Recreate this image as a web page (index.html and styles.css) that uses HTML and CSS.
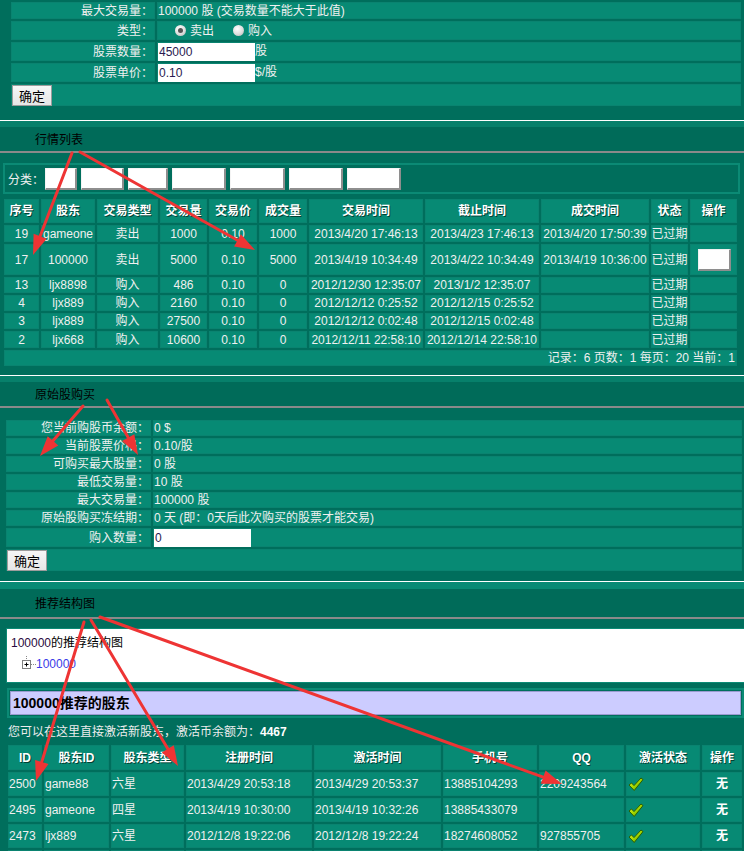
FILE: index.html
```html
<!DOCTYPE html>
<html lang="zh">
<head>
<meta charset="utf-8">
<title>股票交易</title>
<link rel="stylesheet" href="styles.css">
</head>
<body>
<div class="top">
  <table class="form form-top">
    <colgroup><col class="c-lab-top"><col></colgroup>
    <tr class="h17"><td class="lab">最大交易量：</td><td class="val">100000 股 (交易数量不能大于此值)</td></tr>
    <tr class="h19"><td class="lab">类型：</td><td class="val"><span class="radio on"></span>卖出<span class="radio second"></span>购入</td></tr>
    <tr class="h19"><td class="lab">股票数量：</td><td class="val"><input class="inp" type="text" value="45000">股</td></tr>
    <tr class="h19"><td class="lab">股票单价：</td><td class="val"><input class="inp" type="text" value="0.10">$/股</td></tr>
    <tr class="h22"><td colspan="2"><button class="btn">确定</button></td></tr>
  </table>
</div>

<div class="sec">
  <div class="band"></div>
  <div class="head">行情列表</div>
  <div class="body b2">
    <div class="filter">
      <span class="flbl">分类：</span>
      <span class="fb w32"></span><span class="fb w43"></span><span class="fb w40"></span><span class="fb w54"></span><span class="fb w55"></span><span class="fb w54"></span><span class="fb w54"></span>
    </div>
    <table class="grid g1">
      <colgroup>
        <col class="k35"><col class="k54"><col class="k61"><col class="k47"><col class="k48"><col class="k48"><col class="k114"><col class="k114"><col class="k108"><col class="k37"><col class="k47">
      </colgroup>
      <tr class="hd"><td>序号</td><td>股东</td><td>交易类型</td><td>交易量</td><td>交易价</td><td>成交量</td><td>交易时间</td><td>截止时间</td><td>成交时间</td><td>状态</td><td>操作</td></tr>
      <tr class="h17"><td>19</td><td>gameone</td><td>卖出</td><td>1000</td><td>0.10</td><td>1000</td><td>2013/4/20 17:46:13</td><td>2013/4/23 17:46:13</td><td>2013/4/20 17:50:39</td><td>已过期</td><td></td></tr>
      <tr class="h31"><td>17</td><td>100000</td><td>卖出</td><td>5000</td><td>0.10</td><td>5000</td><td>2013/4/19 10:34:49</td><td>2013/4/22 10:34:49</td><td>2013/4/19 10:36:00</td><td>已过期</td><td><span class="wbtn"></span></td></tr>
      <tr class="h16"><td>13</td><td>ljx8898</td><td>购入</td><td>486</td><td>0.10</td><td>0</td><td>2012/12/30 12:35:07</td><td>2013/1/2 12:35:07</td><td></td><td>已过期</td><td></td></tr>
      <tr class="h16"><td>4</td><td>ljx889</td><td>购入</td><td>2160</td><td>0.10</td><td>0</td><td>2012/12/12 0:25:52</td><td>2012/12/15 0:25:52</td><td></td><td>已过期</td><td></td></tr>
      <tr class="h16"><td>3</td><td>ljx889</td><td>购入</td><td>27500</td><td>0.10</td><td>0</td><td>2012/12/12 0:02:48</td><td>2012/12/15 0:02:48</td><td></td><td>已过期</td><td></td></tr>
      <tr class="h17"><td>2</td><td>ljx668</td><td>购入</td><td>10600</td><td>0.10</td><td>0</td><td>2012/12/11 22:58:10</td><td>2012/12/14 22:58:10</td><td></td><td>已过期</td><td></td></tr>
      <tr class="foot"><td colspan="11">记录：6 页数：1 每页：20 当前：1</td></tr>
    </table>
  </div>
</div>

<div class="sec">
  <div class="band"></div>
  <div class="head">原始股购买</div>
  <div class="body b3">
    <table class="form form-mid">
      <colgroup><col class="c-lab-mid"><col></colgroup>
      <tr class="h16"><td class="lab">您当前购股币余额：</td><td class="val">0 $</td></tr>
      <tr class="h16"><td class="lab">当前股票价格：</td><td class="val">0.10/股</td></tr>
      <tr class="h16"><td class="lab">可购买最大股量：</td><td class="val">0 股</td></tr>
      <tr class="h16"><td class="lab">最低交易量：</td><td class="val">10 股</td></tr>
      <tr class="h16"><td class="lab">最大交易量：</td><td class="val">100000 股</td></tr>
      <tr class="h16"><td class="lab">原始股购买冻结期：</td><td class="val">0 天 (即：0天后此次购买的股票才能交易)</td></tr>
      <tr class="h19"><td class="lab">购入数量：</td><td class="val"><input class="inp" type="text" value="0"></td></tr>
      <tr class="h22"><td colspan="2"><button class="btn">确定</button></td></tr>
    </table>
  </div>
</div>

<div class="sec">
  <div class="band band7"></div>
  <div class="head head28">推荐结构图</div>
  <div class="body b4">
    <div class="tree">
      <div class="tree-title"><span class="num">100000</span>的推荐结构图</div>
      <div class="tree-node">
        <svg class="plus" width="14" height="16" viewBox="0 0 14 16">
          <line x1="4.5" y1="0" x2="4.5" y2="4" stroke="#888" stroke-width="1" stroke-dasharray="1 1"/>
          <rect x="0.5" y="4.5" width="8" height="8" fill="#fff" stroke="#808080"/>
          <line x1="2.5" y1="8.5" x2="6.5" y2="8.5" stroke="#000"/>
          <line x1="4.5" y1="6.5" x2="4.5" y2="10.5" stroke="#000"/>
          <line x1="9" y1="8.5" x2="14" y2="8.5" stroke="#888" stroke-dasharray="1 1"/>
        </svg><span class="link">100000</span>
      </div>
    </div>
    <div class="lav-wrap"><div class="lav">100000推荐的股东</div></div>
    <div class="note">您可以在这里直接激活新股东，激活币余额为：<b>4467</b></div>
    <table class="grid g4">
      <colgroup>
        <col class="k34"><col class="k65"><col class="k73"><col class="k126"><col class="k127"><col class="k94"><col class="k85"><col class="k74"><col class="k40">
      </colgroup>
      <tr class="hd"><td>ID</td><td>股东ID</td><td>股东类型</td><td>注册时间</td><td>激活时间</td><td>手机号</td><td>QQ</td><td>激活状态</td><td>操作</td></tr>
      <tr><td>2500</td><td>game88</td><td>六星</td><td>2013/4/29 20:53:18</td><td>2013/4/29 20:53:37</td><td>13885104293</td><td>2209243564</td><td class="ok"><svg class="chk" width="16" height="15" viewBox="0 0 16 15"><defs><linearGradient id="cg" x1="0" y1="0" x2="1" y2="1"><stop offset="0" stop-color="#f2f230"/><stop offset="0.5" stop-color="#a8d800"/><stop offset="1" stop-color="#2f8f00"/></linearGradient></defs><path d="M1 8 L3.5 6 L6 8.6 L13 1 L15 2.6 L6.2 13.5 Z" fill="url(#cg)" stroke="#2a5e00" stroke-width="1" stroke-linejoin="round"/></svg></td><td class="no">无</td></tr>
      <tr><td>2495</td><td>gameone</td><td>四星</td><td>2013/4/19 10:30:00</td><td>2013/4/19 10:32:26</td><td>13885433079</td><td></td><td class="ok"><svg class="chk" width="16" height="15" viewBox="0 0 16 15"><path d="M1 8 L3.5 6 L6 8.6 L13 1 L15 2.6 L6.2 13.5 Z" fill="url(#cg)" stroke="#2a5e00" stroke-width="1" stroke-linejoin="round"/></svg></td><td class="no">无</td></tr>
      <tr><td>2473</td><td>ljx889</td><td>六星</td><td>2012/12/8 19:22:06</td><td>2012/12/8 19:22:24</td><td>18274608052</td><td>927855705</td><td class="ok"><svg class="chk" width="16" height="15" viewBox="0 0 16 15"><path d="M1 8 L3.5 6 L6 8.6 L13 1 L15 2.6 L6.2 13.5 Z" fill="url(#cg)" stroke="#2a5e00" stroke-width="1" stroke-linejoin="round"/></svg></td><td class="no">无</td></tr>
      <tr><td></td><td></td><td></td><td></td><td></td><td></td><td></td><td></td><td></td></tr>
    </table>
  </div>
</div>

<svg class="arrows" width="744" height="851" viewBox="0 0 744 851">
  <g stroke="#ee3434" stroke-width="3" stroke-linecap="round">
    <line x1="72" y1="153" x2="40.1" y2="236.3"/>
    <line x1="80" y1="152" x2="237.5" y2="240.3"/>
    <line x1="83" y1="406" x2="53" y2="440.8"/>
    <line x1="107" y1="400" x2="128.2" y2="437.6"/>
    <line x1="84" y1="622" x2="41.8" y2="761.9"/>
    <line x1="91" y1="620" x2="167.8" y2="748.8"/>
    <line x1="100" y1="617" x2="543.2" y2="777.2"/>
  </g>
  <g fill="#ee3434">
    <polygon points="33,255 46.7,238.8 33.6,233.8"/>
    <polygon points="255,250 234.1,246.4 240.9,234.2"/>
    <polygon points="40,456 58.3,445.4 47.7,436.2"/>
    <polygon points="138,455 122.1,441 134.3,434.2"/>
    <polygon points="36,781 48.5,763.9 35.1,759.9"/>
    <polygon points="178,766 161.8,752.4 173.8,745.2"/>
    <polygon points="562,784 540.8,783.8 545.6,770.6"/>
  </g>
</svg>
</body>
</html>
```

FILE: styles.css
```css
* { box-sizing: border-box; }
html { overflow: hidden; background: #006e5c; }
body {
  margin: 0;
  background: #006e5c;
  font-family: "Liberation Sans", "Noto Sans CJK SC", sans-serif;
  font-size: 12px;
  color: #f0f0f0;
}
table { border-collapse: separate; border-spacing: 2px; table-layout: fixed; }
td {
  padding: 0;
  background: #078a74;
  box-shadow: inset 0 0 0 1px #0a8370;
  white-space: nowrap;
  overflow: hidden;
  line-height: 14px;
}

.h16 td { height: 16px; }
.h17 td { height: 17px; }
.h19 td { height: 19px; }
.h22 td { height: 22px; }
.h31 td { height: 31px; }

/* top form */
.top { padding: 0 0 12px 9px; }
.form-top { width: 734px; }
.c-lab-top { width: 144px; }
.lab { text-align: right; padding-right: 2px; }
.val { padding-left: 1px; }

.radio {
  display: inline-block;
  width: 11px; height: 11px;
  border-radius: 50%;
  background: radial-gradient(circle at 40% 35%, #ffffff 0, #dedede 55%, #a9a9a9 100%);
  vertical-align: -1px;
  margin: 0 4px 0 17px;
  position: relative;
}
.radio.second { margin-left: 19px; }
.radio.on::after {
  content: "";
  position: absolute;
  left: 3px; top: 3px;
  width: 5px; height: 5px;
  border-radius: 50%;
  background: #555;
}

.inp {
  width: 97px; height: 18px;
  border: 0; margin: 0; padding: 0 0 0 1px;
  font: 12px "Liberation Sans", sans-serif;
  color: #2a1a50;
  background: #fff;
  vertical-align: middle;
  outline: none;
}

.btn {
  width: 40px; height: 21px;
  margin: 0 0 0 1px; padding: 0;
  font: 13px "Noto Sans CJK SC", sans-serif;
  line-height: 19px;
  color: #000;
  background: linear-gradient(#f6f6f6, #e6e6e6);
  border: 1px solid #9c9c9c;
  border-radius: 0;
  vertical-align: middle;
}

/* sections */
.sec { border-top: 1px solid #ffffff; }
.band { height: 6px; background: #07806b; }
.band7 { height: 7px; background: #088a74; }
.head {
  height: 26px;
  line-height: 26px;
  padding-left: 35px;
  color: #000;
  background: #006b59;
  border-bottom: 2px solid #8a8a8a;
}
.head28 { height: 30px; line-height: 30px; }

/* market list */
.b2 { padding: 10px 0 7px 2px; }
.filter {
  margin-left: 1px;
  width: 737px; height: 31px;
  border: 2px solid #0b8a75;
  display: flex;
  align-items: center;
  padding-left: 3px;
}
.flbl { width: 37px; color: #f0f0f0; }
.fb {
  height: 22px;
  margin-right: 4px;
  background: #fff;
  border-top: 1px solid #f4f4f4;
  border-left: 1px solid #f4f4f4;
  border-right: 2px solid #8e8e8e;
  border-bottom: 2px solid #8e8e8e;
}
.w32 { width: 32px; } .w43 { width: 43px; } .w40 { width: 40px; }
.w54 { width: 54px; } .w55 { width: 55px; }

.g1 { margin-top: 3px; }
.g1 td { text-align: center; }
.k35 { width: 35px; } .k54 { width: 54px; } .k61 { width: 61px; } .k47 { width: 47px; }
.k48 { width: 48px; } .k114 { width: 114px; } .k108 { width: 108px; } .k37 { width: 37px; }
.hd td {
  font-weight: bold;
  color: #fff;
  text-shadow: 1px 1px 0 rgba(0, 40, 30, 0.75);
}
.g1 .hd td { height: 24px; }
.g1 .foot td { text-align: right; padding-right: 2px; height: 16px; }
.wbtn {
  display: inline-block;
  width: 33px; height: 22px;
  margin-left: 2px;
  vertical-align: middle;
  background: #fff;
  border-top: 1px solid #f0f0f0;
  border-left: 1px solid #f0f0f0;
  border-right: 2px solid #8e8e8e;
  border-bottom: 2px solid #8e8e8e;
}

/* original shares */
.b3 { padding: 10px 0 8px 4px; }
.form-mid { width: 740px; }
.c-lab-mid { width: 145px; }

/* structure */
.b4 { padding: 9px 0 0 6px; }
.tree {
  width: 742px; height: 55px;
  background: #fff;
  border: 1px solid #0b8a75;
  color: #000;
  padding: 6px 0 0 4px;
}
.tree-title { height: 17px; line-height: 17px; }
.num { color: #2a0a40; }
.tree-node { margin: 4px 0 0 11px; height: 16px; display: flex; align-items: center; }
.plus { display: block; }
.link { color: #3a3ae8; margin-left: 0; }
.lav-wrap {
  margin: 5px 0 0 1px;
  width: 737px;
  border: 2px solid #0b8a75;
  padding: 1px;
}
.lav {
  height: 24px;
  line-height: 22px;
  background: #ccccff;
  border: 1px solid #9a9ad0;
  padding-left: 2px;
  color: #000;
  font-weight: bold;
  font-size: 14px;
}
.note { margin-top: 6px; height: 16px; line-height: 16px; padding-left: 2px; color: #ececec; }
.note b { color: #fff; }

.g4 { margin-top: 3px; }
.g4 td { height: 24px; padding-left: 1px; }
.g4 .hd td { height: 25px; text-align: center; padding-left: 0; }
.k34 { width: 34px; } .k65 { width: 65px; } .k73 { width: 73px; } .k126 { width: 126px; }
.k127 { width: 127px; } .k94 { width: 94px; } .k85 { width: 85px; } .k74 { width: 74px; } .k40 { width: 40px; }
.ok { vertical-align: middle; }
.chk { display: block; margin-left: 1px; }
.no { text-align: center; font-weight: bold; color: #fff; padding-left: 0 !important; }

.arrows { position: absolute; left: 0; top: 0; pointer-events: none; }
```
